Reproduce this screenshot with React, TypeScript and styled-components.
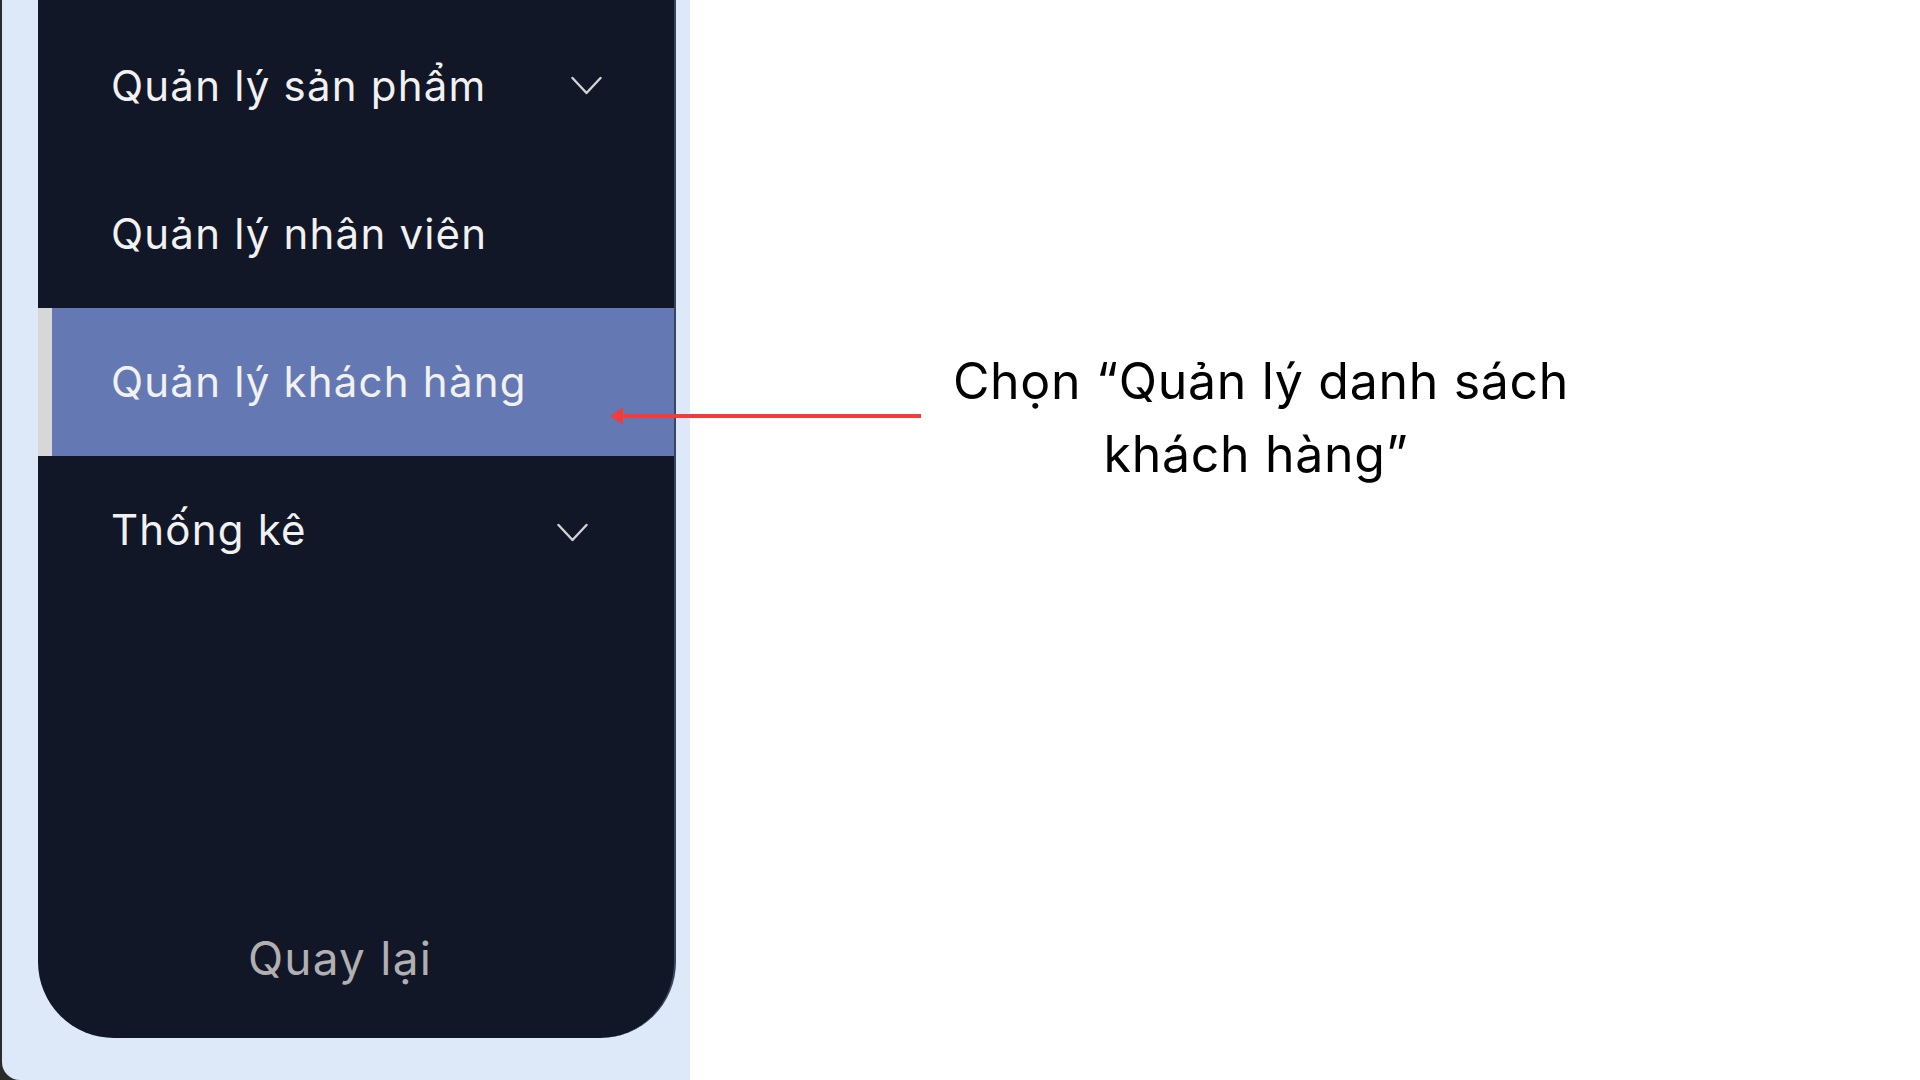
import React from "react";
import styled, { createGlobalStyle } from "styled-components";

const GlobalStyle = createGlobalStyle`
  html, body { margin: 0; padding: 0; background: #ffffff; }
  body { font-family: Inter, "Noto Sans", "Liberation Sans", sans-serif; }
  * { box-sizing: border-box; }
`;

const Page = styled.div`
  position: relative;
  display: flex;
  width: 1920px;
  height: 1080px;
  overflow: hidden;
  background: #ffffff;
`;

const Frame = styled.div`
  flex: 0 0 690px;
  display: flex;
  background: #2b2b2b;
`;

const Panel = styled.div`
  flex: 1;
  margin-left: 2px;
  background: #dde9f8;
  border-bottom-left-radius: 18px;
  padding: 0 14px 0 36px;
`;

const Sidebar = styled.nav`
  height: 1038px;
  background: #111726;
  border-right: 2px solid #3a4660;
  border-bottom-left-radius: 76px;
  border-bottom-right-radius: 76px;
  display: flex;
  flex-direction: column;
  padding-top: 12px;
  overflow: hidden;
`;

const MenuItem = styled.div<{ $active?: boolean; $chevronInset?: number }>`
  height: 148px;
  display: flex;
  align-items: center;
  justify-content: space-between;
  padding-left: ${(p) => (p.$active ? 59 : 73)}px;
  padding-right: ${(p) => p.$chevronInset ?? 72}px;
  border-left: ${(p) => (p.$active ? "14px solid #d7d7d7" : "none")};
  background: ${(p) => (p.$active ? "#6479b3" : "transparent")};
  color: #f1f1f1;
  font-size: 42px;
  line-height: 1;
  letter-spacing: 1.2px;
`;

const Chevron = styled.svg<{ $shift: number }>`
  width: 31px;
  height: 19px;
  margin-top: ${(p) => p.$shift}px;
  flex-shrink: 0;
`;

const Footer = styled.div`
  margin-top: auto;
  padding: 0 32px 50px 0;
  text-align: center;
  color: #b1afb2;
  font-size: 46px;
  line-height: 60px;
  letter-spacing: 1.2px;
`;

const RightArea = styled.section`
  flex: 1;
  padding-top: 345px;
`;

const Annotation = styled.p`
  margin: 0 0 0 221px;
  width: 700px;
  text-align: center;
  color: #000000;
  font-size: 50px;
  line-height: 73px;
  font-weight: 400;
  letter-spacing: 0.7px;
`;

const SecondLine = styled.span`
  display: inline-block;
  margin-right: 10px;
`;

const Arrow = styled.svg`
  position: absolute;
  left: 608px;
  top: 404px;
  width: 316px;
  height: 24px;
`;

const ChevronIcon = ({ shift = -2 }: { shift?: number }) => (
  <Chevron viewBox="0 0 31 19" $shift={shift}>
    <polyline
      points="1.5,2 15.5,17 29.5,2"
      fill="none"
      stroke="#d2d2d2"
      strokeWidth="2.4"
      strokeLinecap="round"
      strokeLinejoin="round"
    />
  </Chevron>
);

export default function App() {
  return (
    <>
      <GlobalStyle />
      <Page>
        <Frame>
          <Panel>
            <Sidebar>
              <MenuItem $chevronInset={72}>
                <span>Quản lý sản phẩm</span>
                <ChevronIcon shift={-2} />
              </MenuItem>
              <MenuItem>
                <span>Quản lý nhân viên</span>
              </MenuItem>
              <MenuItem $active>
                <span>Quản lý khách hàng</span>
              </MenuItem>
              <MenuItem $chevronInset={86}>
                <span>Thống kê</span>
                <ChevronIcon shift={4} />
              </MenuItem>
              <Footer>Quay lại</Footer>
            </Sidebar>
          </Panel>
        </Frame>
        <RightArea>
          <Annotation>
            Chọn “Quản lý danh sách
            <br />
            <SecondLine>khách hàng”</SecondLine>
          </Annotation>
        </RightArea>
        <Arrow viewBox="0 0 316 24">
          <rect x="12" y="10" width="301" height="4" fill="#f23b3b" />
          <polygon points="2,12 15,3.5 15,20.5" fill="#f23b3b" />
        </Arrow>
      </Page>
    </>
  );
}
